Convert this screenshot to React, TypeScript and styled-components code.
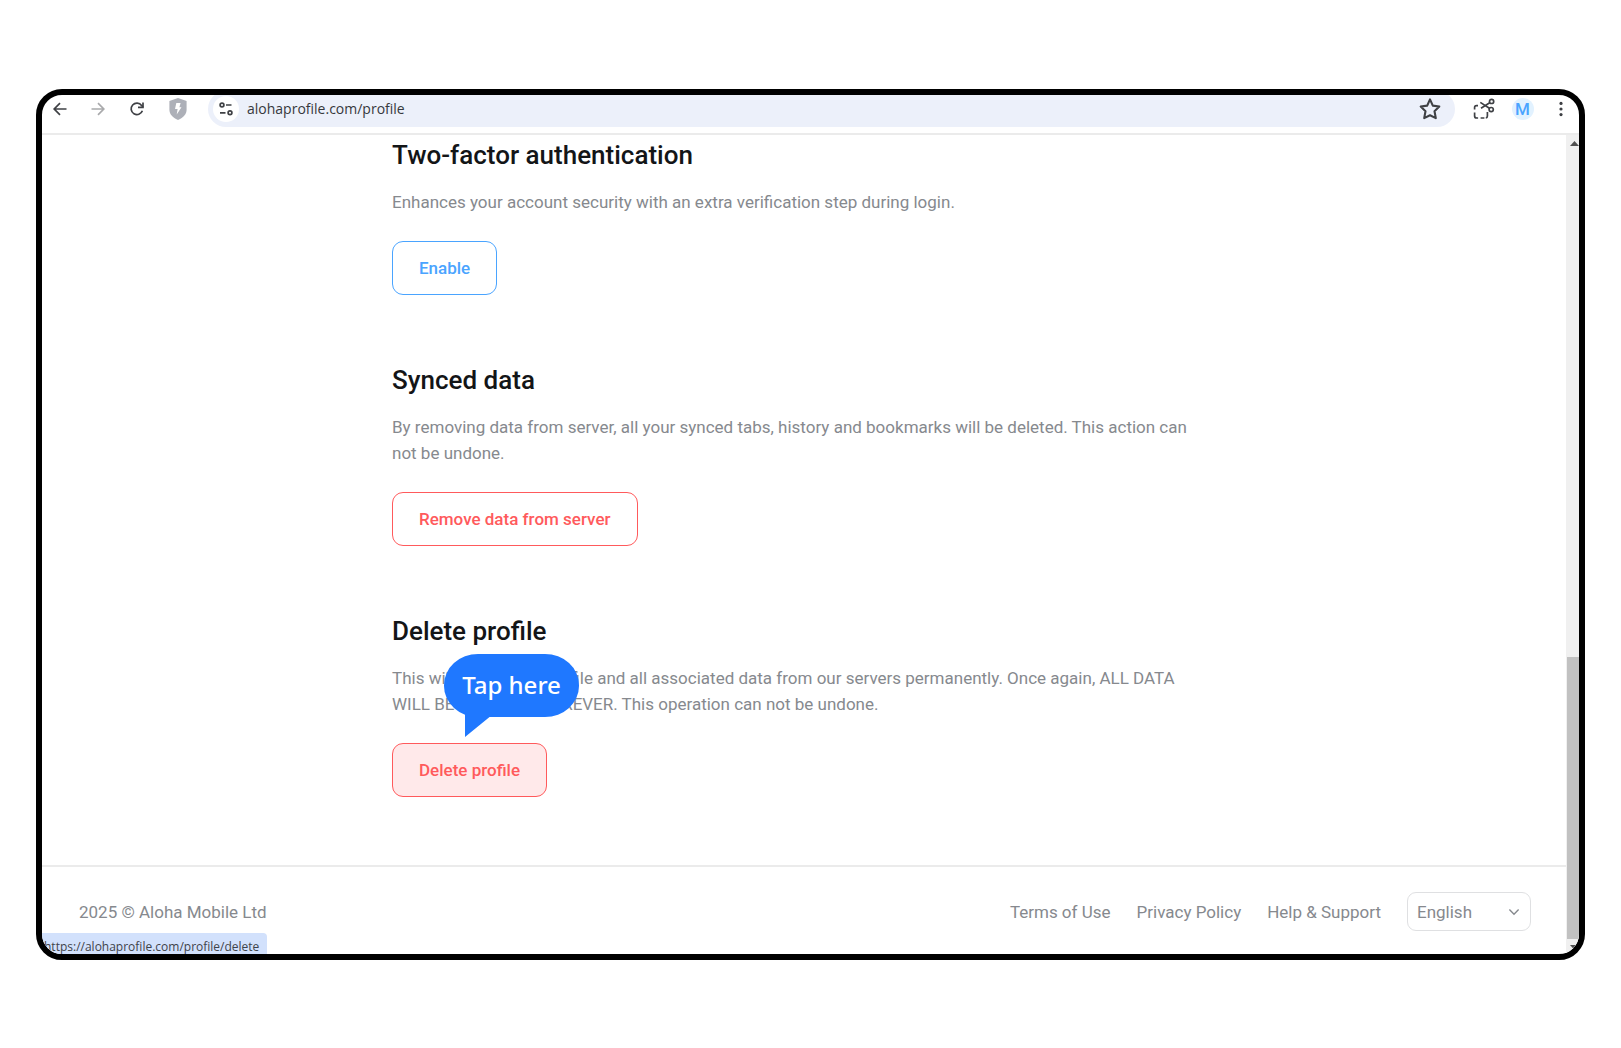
import React from "react";
import styled, { createGlobalStyle, css } from "styled-components";

const color = {
  text: "#131517",
  muted: "#86898e",
  line: "#ebebeb",
  blue: "#4aa4ff",
  red: "#ff5a5c",
  bubble: "#1f78ff",
  icon: "#3f4145",
};

const GlobalStyle = createGlobalStyle`
  *, *::before, *::after { box-sizing: border-box; }
  body {
    margin: 0;
    background: #fff;
    color: ${color.text};
    font-family: Roboto, "Liberation Sans", sans-serif;
  }
`;

const Stage = styled.div`
  display: flex;
  flex-direction: column;
  padding: 89px 36px;
`;

const BrowserWindow = styled.div`
  position: relative;
  overflow: hidden;
  border: 6px solid #000;
  border-radius: 26px;
  background: #fff;
`;

const Toolbar = styled.header`
  display: flex;
  align-items: center;
  height: 40px;
  padding: 0 0 10px 6px;
  border-bottom: 2px solid ${color.line};
`;

const IconButton = styled.button<{ $wide?: number; $faded?: boolean }>`
  display: flex;
  flex: none;
  align-items: center;
  justify-content: center;
  width: ${(p) => p.$wide ?? 39}px;
  height: 28px;
  padding: 0;
  border: 0;
  background: none;
  color: ${(p) => (p.$faded ? "#a9aaac" : color.icon)};
`;

const AddressBar = styled.div`
  display: flex;
  flex: 1;
  align-items: center;
  gap: 8px;
  height: 36px;
  margin: 0 9px 0 2px;
  padding: 0 12px 0 5px;
  border-radius: 18px;
  background: #ecf0fa;
`;

const SiteInfo = styled.button`
  display: flex;
  flex: none;
  align-items: center;
  justify-content: center;
  width: 26px;
  height: 26px;
  padding: 0;
  border: 0;
  border-radius: 50%;
  background: #fff;
  color: ${color.icon};
`;

const AddressInput = styled.input`
  flex: 1;
  min-width: 0;
  padding: 0;
  border: 0;
  outline: 0;
  background: none;
  color: #36383c;
  font: 14px/20px "Open Sans", "Noto Sans", sans-serif;
`;

const Avatar = styled.span`
  width: 22px;
  height: 22px;
  border-radius: 50%;
  background: #e2f2ff;
  color: ${color.blue};
  font: 500 17px/22px Roboto, sans-serif;
  text-align: center;
`;

const Viewport = styled.div`
  display: flex;
`;

const Page = styled.div`
  flex: 1;
  min-width: 0;
`;

const Content = styled.main`
  display: flex;
  flex-direction: column;
  gap: 68px;
  max-width: 824px;
  margin: 0 auto;
  padding: 3px 0 68px;
`;

const Section = styled.section`
  position: relative;
  display: flex;
  flex-direction: column;
  align-items: flex-start;
`;

const Title = styled.h2`
  margin: 0 0 17px;
  font-size: 26px;
  font-weight: 500;
  line-height: 34px;
`;

const Description = styled.p`
  max-width: 816px;
  margin: 0 0 26px;
  color: ${color.muted};
  font-size: 17px;
  line-height: 26px;
`;

const ActionButton = styled.button<{ $danger?: boolean; $active?: boolean }>`
  height: 54px;
  padding: 0 26px;
  border: 1px solid currentColor;
  border-radius: 11px;
  background: #fff;
  color: ${color.blue};
  font: 500 17px/26px Roboto, sans-serif;
  ${(p) =>
    p.$danger &&
    css`
      color: ${color.red};
    `}
  ${(p) =>
    p.$active &&
    css`
      background: #ffe9ea;
    `}
`;

const Callout = styled.div`
  position: absolute;
  top: 40px;
  left: 52px;
  width: 135px;
  height: 63px;
  border-radius: 34px / 31px;
  background: ${color.bubble};
  color: #fff;
  font: 500 24px/62px "Noto Sans", "Open Sans", sans-serif;
  text-align: center;
  white-space: nowrap;

  &::after {
    content: "";
    position: absolute;
    top: 56px;
    left: 21px;
    width: 34px;
    height: 27px;
    background: ${color.bubble};
    clip-path: polygon(0 0, 100% 0, 74% 24%, 0 100%);
  }
`;

const Footer = styled.footer`
  display: flex;
  align-items: center;
  justify-content: space-between;
  padding: 25px 35px 23px 37px;
  border-top: 2px solid ${color.line};
  color: ${color.muted};
  font-size: 17px;
  line-height: 26px;
`;

const FooterNav = styled.nav`
  display: flex;
  align-items: center;
  gap: 26px;
`;

const FooterLink = styled.a`
  color: inherit;
  text-decoration: none;
`;

const SelectBox = styled.label`
  display: grid;
  align-items: center;
  width: 124px;

  & > * {
    grid-area: 1 / 1;
  }

  & > svg {
    justify-self: end;
    margin-right: 11px;
    pointer-events: none;
  }
`;

const LanguageSelect = styled.select`
  appearance: none;
  width: 100%;
  height: 39px;
  padding: 0 9px;
  border: 1px solid #dfe0e2;
  border-radius: 9px;
  background: #fff;
  color: ${color.muted};
  font: 17px/26px Roboto, sans-serif;
`;

const ScrollTrack = styled.div`
  display: flex;
  flex: none;
  flex-direction: column;
  width: 13px;
  overflow: hidden;
  background: #f0f0f0;
  color: #505050;
`;

const ScrollArrow = styled.svg`
  flex: none;
  width: 17px;
  height: 15px;
`;

const ScrollSpace = styled.div`
  flex: 507;
`;

const ScrollThumb = styled.div`
  flex: 282;
  margin-left: 1px;
  background: #c1c1c1;
`;

const StatusBar = styled.div`
  position: absolute;
  bottom: 0;
  left: 0;
  height: 21px;
  padding: 0 8px 0 2px;
  overflow: hidden;
  border-radius: 0 4px 0 0;
  background: #d2e1fc;
  color: #3f434a;
  font: 12px/27px "Open Sans", "Noto Sans", sans-serif;
`;

const BackIcon = () => (
  <svg width="20" height="20" viewBox="0 0 20 20" fill="none" stroke="currentColor" strokeWidth="1.7">
    <path d="M16.5 10H4.6M10 4.2 4.2 10l5.8 5.8" />
  </svg>
);

const ForwardIcon = () => (
  <svg width="20" height="20" viewBox="0 0 20 20" fill="none" stroke="currentColor" strokeWidth="1.7">
    <path d="M3.5 10h11.9M10 4.2l5.8 5.8-5.8 5.8" />
  </svg>
);

const ReloadIcon = () => (
  <svg width="20" height="20" viewBox="0 0 20 20" fill="none" stroke="currentColor" strokeWidth="1.7">
    <path d="M15.4 11.8A5.8 5.8 0 1 1 14.6 6.4L16 8" />
    <path d="M16 3.4v4.9h-5" />
  </svg>
);

const ShieldIcon = () => (
  <svg width="18" height="24" viewBox="0 0 18 24">
    <path d="M9 1 17.6 4v8.6c0 4.6-3 8-8.6 10.4C3.4 20.6.4 17.2.4 12.6V4z" fill="#adb0b8" />
    <path d="M7.3 6h4.3l-1.2 4.2h2.1L7.7 17.5l.9-5.5H6z" fill="#fff" />
  </svg>
);

const TuneIcon = () => (
  <svg width="14" height="14" viewBox="0 0 14 14" fill="none" stroke="currentColor" strokeWidth="1.7">
    <circle cx="3" cy="3" r="1.9" />
    <path d="M7 3h5.5M1 10.8h5.5" />
    <circle cx="11" cy="10.8" r="1.9" />
  </svg>
);

const StarIcon = () => (
  <svg width="24" height="24" viewBox="0 0 24 24" fill="none" stroke="currentColor" strokeWidth="2.1" strokeLinejoin="round">
    <path d="m12 2.4 2.8 6.2 6.5.9-4.8 4.7 1.3 6.9L12 18.2l-5.8 2.9 1.3-6.9L2.7 9.5l6.5-.9z" />
  </svg>
);

const ClipIcon = () => (
  <svg width="22" height="22" viewBox="0 0 22 22" fill="none" stroke="currentColor" strokeWidth="1.7">
    <circle cx="18.6" cy="3.4" r="2.1" />
    <circle cx="18.2" cy="11.6" r="2.1" />
    <path d="M16.7 4.8 8 10.2M16.4 10.3 7.3 4.4" />
    <path d="M5 7.6H3.5Q1.6 7.6 1.6 9.6v1.8M1.6 14.6V18q0 2 2 2h1.5M7.6 20h3.8M14.4 14V18q0 1.8-1.6 2" />
  </svg>
);

const MoreIcon = () => (
  <svg width="4" height="16" viewBox="0 0 4 16" fill="currentColor">
    <circle cx="2" cy="2.4" r="1.6" />
    <circle cx="2" cy="8" r="1.6" />
    <circle cx="2" cy="13.6" r="1.6" />
  </svg>
);

const ChevronIcon = () => (
  <svg width="12" height="12" viewBox="0 0 12 12" fill="none" stroke={color.muted} strokeWidth="1.4">
    <path d="m1.4 3.6 4.6 4.6 4.6-4.6" />
  </svg>
);

export default function App() {
  return (
    <Stage>
      <GlobalStyle />
      <BrowserWindow>
        <Toolbar>
          <IconButton $wide={24} aria-label="Back"><BackIcon /></IconButton>
          <IconButton $wide={52} $faded aria-label="Forward"><ForwardIcon /></IconButton>
          <IconButton $wide={26} aria-label="Reload"><ReloadIcon /></IconButton>
          <IconButton $wide={56} aria-label="Shield"><ShieldIcon /></IconButton>
          <AddressBar>
            <SiteInfo aria-label="Site information"><TuneIcon /></SiteInfo>
            <AddressInput aria-label="Address" defaultValue="alohaprofile.com/profile" />
            <IconButton $wide={26} aria-label="Bookmark"><StarIcon /></IconButton>
          </AddressBar>
          <IconButton aria-label="Clip page"><ClipIcon /></IconButton>
          <IconButton aria-label="Account"><Avatar>M</Avatar></IconButton>
          <IconButton $wide={37} aria-label="Menu"><MoreIcon /></IconButton>
        </Toolbar>
        <Viewport>
          <Page>
            <Content>
              <Section>
                <Title>Two-factor authentication</Title>
                <Description>
                  Enhances your account security with an extra verification step during login.
                </Description>
                <ActionButton>Enable</ActionButton>
              </Section>
              <Section>
                <Title>Synced data</Title>
                <Description>
                  By removing data from server, all your synced tabs, history and bookmarks will be
                  deleted. This action can not be undone.
                </Description>
                <ActionButton $danger>Remove data from server</ActionButton>
              </Section>
              <Section>
                <Title>Delete profile</Title>
                <Description>
                  This will delete your profile and all associated data from our servers permanently.
                  Once again, ALL DATA WILL BE REMOVED FOREVER. This operation can not be undone.
                </Description>
                <ActionButton $danger $active>Delete profile</ActionButton>
                <Callout>Tap here</Callout>
              </Section>
            </Content>
            <Footer>
              <span>2025 © Aloha Mobile Ltd</span>
              <FooterNav>
                <FooterLink href="#terms">Terms of Use</FooterLink>
                <FooterLink href="#privacy">Privacy Policy</FooterLink>
                <FooterLink href="#help">Help &amp; Support</FooterLink>
                <SelectBox>
                  <LanguageSelect aria-label="Language" defaultValue="English">
                    <option>English</option>
                  </LanguageSelect>
                  <ChevronIcon />
                </SelectBox>
              </FooterNav>
            </Footer>
          </Page>
          <ScrollTrack>
            <ScrollArrow viewBox="0 0 17 15"><path d="M4 11h9L8.5 6z" fill="currentColor" /></ScrollArrow>
            <ScrollSpace />
            <ScrollThumb />
            <ScrollArrow viewBox="0 0 17 15"><path d="M4 6h9l-4.5 5z" fill="currentColor" /></ScrollArrow>
          </ScrollTrack>
        </Viewport>
        <StatusBar>https://alohaprofile.com/profile/delete</StatusBar>
      </BrowserWindow>
    </Stage>
  );
}
